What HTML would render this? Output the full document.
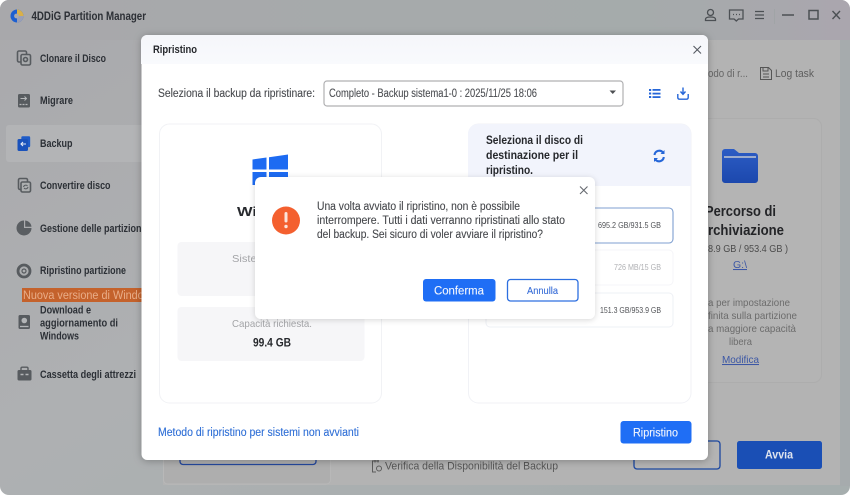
<!DOCTYPE html>
<html lang="it">
<head>
<meta charset="utf-8">
<title>4DDiG Partition Manager</title>
<style>
html,body{margin:0;padding:0;width:850px;height:496px;overflow:hidden;background:#fff}
svg{display:block;filter:blur(.3px)}
text{font-family:"Liberation Sans",sans-serif}
.s{font-size:11px;font-weight:bold;fill:#2c3036}
</style>
</head>
<body>
<svg width="850" height="496" viewBox="0 0 850 496" xmlns="http://www.w3.org/2000/svg">
<defs>
<linearGradient id="bg" x1="0" y1="0" x2="1" y2="1">
<stop offset="0" stop-color="#a9a9ac"/><stop offset=".45" stop-color="#aeb0b2"/><stop offset="1" stop-color="#a6aeae"/>
</linearGradient>
<linearGradient id="top" x1="0" y1="0" x2="1" y2="0">
<stop offset="0" stop-color="#a8a8ab"/><stop offset=".75" stop-color="#a5abab"/><stop offset="1" stop-color="#aaa6ae"/>
</linearGradient>
<linearGradient id="hd" x1="0" y1="0" x2="0" y2="1">
<stop offset="0" stop-color="#f5f6fa"/><stop offset="1" stop-color="#f9fafd"/>
</linearGradient>
<linearGradient id="fold" x1="0" y1="0" x2="0" y2="1">
<stop offset="0" stop-color="#2c5cc4"/><stop offset="1" stop-color="#1c48ad"/>
</linearGradient>
<filter id="sh" x="-10%" y="-10%" width="120%" height="120%"><feDropShadow dx="0" dy="1" stdDeviation="4" flood-color="#000" flood-opacity=".28"/></filter>
<filter id="sh2" x="-10%" y="-15%" width="120%" height="130%"><feDropShadow dx="0" dy="1" stdDeviation="3" flood-color="#000" flood-opacity=".16"/></filter>
<clipPath id="sideclip"><rect x="0" y="0" width="142" height="496"/></clipPath>
<clipPath id="modalclip"><rect x="141" y="35" width="567" height="425" rx="6"/></clipPath>
</defs>

<!-- window -->
<rect width="850" height="496" fill="#fff"/>
<rect x="0" y="0" width="850" height="495" rx="9" fill="url(#bg)"/>
<path d="M0 9a9 9 0 0 1 9-9H841a9 9 0 0 1 9 9V40H0z" fill="url(#top)"/>
<rect x="163" y="40" width="677" height="445" fill="#b3b3b3"/>
<rect x="840" y="40" width="10" height="446" fill="#a6abad"/>

<!-- title bar -->
<circle cx="17" cy="16" r="6.5" fill="#1c5fd0"/>
<path d="M17 9.5a6.5 6.5 0 0 1 6.5 6.5H17z" fill="#d9b04a"/>
<path d="M17 16h6.5a6.5 6.5 0 0 1-6.5 6.5z" fill="#9a9fb6"/>
<circle cx="16.5" cy="16" r="2.4" fill="#a9a9ac"/>
<text x="31.5" y="20" font-size="11.5" font-weight="bold" fill="#2c2f35" textLength="114.5" lengthAdjust="spacingAndGlyphs">4DDiG Partition Manager</text>

<g fill="none" stroke="#4c5054" stroke-width="1.3">
<circle cx="710.5" cy="12.5" r="3"/>
<path d="M705.5 20.5v-1.2c0-1.5 1.5-2.3 5-2.3s5 .8 5 2.3v1.2z"/>
<path d="M729.5 10h13.5v9h-4.5l-2.2 2-2.2-2h-4.600z"/>
<path d="M755 11.5h9M755 15h9M755 18.500h9"/>
<path d="M782 15h12" stroke-width="1.500"/>
<rect x="809" y="10.500" width="9" height="8.500" stroke-width="1.500"/>
<path d="M832.500 11l7.500 8M840 11l-7.500 8" stroke-width="1.400"/>
</g>
<path d="M733 14.500h1M736 14.500h1M739 14.500h1" stroke="#4c5054" stroke-width="1.200"/>
<path d="M774.500 9v15" stroke="#a0a4a6"/>

<!-- sidebar -->
<rect x="6" y="125" width="140" height="37" rx="3" fill="#b3b4b6"/>
<g fill="none" stroke="#575b5f" stroke-width="1.600">
<rect x="17.500" y="51" width="9" height="11" rx="1.500"/>
<rect x="21" y="54.500" width="9.500" height="10.500" rx="1.500" fill="#a9abad"/>
<circle cx="25.500" cy="59.500" r="2"/>
<rect x="18.500" y="178.500" width="9" height="11" rx="1.500"/>
<rect x="21" y="182" width="9.500" height="10" rx="1.500" fill="#acaeaf"/>
<path d="M23.500 187a2.300 2.300 0 0 1 4-1M28 187a2.300 2.300 0 0 1-4 1" stroke-width="1"/>
<circle cx="24" cy="271" r="6" stroke-width="2.800"/>
<circle cx="24" cy="271" r="2" stroke-width="1.200"/>
</g>
<rect x="18" y="94" width="12" height="13.500" rx="1.500" fill="#575b5f"/>
<path d="M20.500 98.500h6m-2-2l2 2-2 2" fill="none" stroke="#b6b8ba" stroke-width="1"/>
<path d="M19.500 104.500h9" stroke="#b6b8ba" stroke-width="1.200" stroke-dasharray="2 1"/>
<rect x="21" y="136" width="9.500" height="11.500" rx="1.500" fill="#1f5cc8" stroke="#b5b6b8" stroke-width=".6"/>
<rect x="17.500" y="139" width="10.500" height="12" rx="1.500" fill="#1a52bb"/>
<path d="M26 144h-5m2-2l-2 2 2 2" fill="none" stroke="#e4e9f4" stroke-width="1.100"/>
<path d="M31.500 228a7.500 7.500 0 1 1-7.500-7.500V228z" fill="#5a5e62"/>
<path d="M25.200 220.500a7 7 0 0 1 6.300 6.300h-6.300z" fill="#5a5e62"/>
<rect x="18.500" y="315" width="11.500" height="14" rx="1.500" fill="#575b5f"/>
<circle cx="24.300" cy="320.500" r="2.800" fill="#b3b5b7"/>
<path d="M20 326.500h8.500" stroke="#b3b5b7" stroke-width="1.300"/>
<rect x="17.500" y="370" width="14" height="10.500" rx="1.500" fill="#575b5f"/>
<path d="M21 370v-1.500c0-.8.500-1.300 1.300-1.300h4.400c.8 0 1.300.5 1.300 1.300v1.500" fill="none" stroke="#575b5f" stroke-width="1.400"/>
<path d="M20.500 374.500h3M25.500 374.500h3" stroke="#b3b5b7" stroke-width="1.500"/>

<g clip-path="url(#sideclip)">
<text class="s" x="40" y="62" textLength="66" lengthAdjust="spacingAndGlyphs">Clonare il Disco</text>
<text class="s" x="40" y="104" textLength="33" lengthAdjust="spacingAndGlyphs">Migrare</text>
<text class="s" x="40" y="147" textLength="32.500" lengthAdjust="spacingAndGlyphs">Backup</text>
<text class="s" x="40" y="189" textLength="70.500" lengthAdjust="spacingAndGlyphs">Convertire disco</text>
<text class="s" x="40" y="232" textLength="104" lengthAdjust="spacingAndGlyphs">Gestione delle partizioni</text>
<text class="s" x="40" y="274" textLength="86" lengthAdjust="spacingAndGlyphs">Ripristino partizione</text>
<rect x="22" y="288" width="125" height="14" fill="#c4622c"/>
<text x="23" y="299" font-size="11.500" fill="#e9ad88" textLength="134" lengthAdjust="spacingAndGlyphs">Nuova versione di Windows</text>
<text class="s" x="40" y="313.500" textLength="51" lengthAdjust="spacingAndGlyphs">Download e</text>
<text class="s" x="40" y="326.500" textLength="78" lengthAdjust="spacingAndGlyphs">aggiornamento di</text>
<text class="s" x="40" y="339.500" textLength="39" lengthAdjust="spacingAndGlyphs">Windows</text>
<text class="s" x="40" y="378" textLength="96" lengthAdjust="spacingAndGlyphs">Cassetta degli attrezzi</text>
</g>

<!-- right panel behind -->
<text x="708" y="77" font-size="11" fill="#666" textLength="40" lengthAdjust="spacingAndGlyphs">odo di r...</text>
<path d="M760.500 67.500h8l3 3v9h-11zM763 67.500v3.500h5v-3.500M763 74h6M763 77h6" fill="none" stroke="#555" stroke-width="1"/>
<text x="775" y="77" font-size="11" fill="#5e5e5e" textLength="39" lengthAdjust="spacingAndGlyphs">Log task</text>
<rect x="680" y="118.500" width="141.500" height="264" rx="8" fill="#b4b4b4" stroke="#adadad"/>
<path d="M722 152a3 3 0 0 1 3-3h9l5 4h16a3 3 0 0 1 3 3v24a3 3 0 0 1-3 3H725a3 3 0 0 1-3-3z" fill="url(#fold)"/>
<path d="M724 157h32" stroke="#c3c8d2" stroke-width="1.500"/>
<text x="705" y="216" font-size="14.500" font-weight="bold" fill="#232427" textLength="71" lengthAdjust="spacingAndGlyphs">Percorso di</text>
<text x="708" y="235" font-size="14.500" font-weight="bold" fill="#232427" textLength="76" lengthAdjust="spacingAndGlyphs">rchiviazione</text>
<text x="708" y="252" font-size="10.500" fill="#4c4c4c" textLength="80" lengthAdjust="spacingAndGlyphs">8.9 GB / 953.4 GB )</text>
<text x="733" y="268" font-size="10.500" fill="#3c57a5" textLength="14" lengthAdjust="spacingAndGlyphs" text-decoration="underline">G:\</text>
<g font-size="10.500" fill="#6c6c6c">
<text x="708" y="306" textLength="82" lengthAdjust="spacingAndGlyphs">a per impostazione</text>
<text x="708" y="319" textLength="89" lengthAdjust="spacingAndGlyphs">finita sulla partizione</text>
<text x="708" y="332" textLength="88" lengthAdjust="spacingAndGlyphs">a maggiore capacità</text>
<text x="729" y="345" textLength="23" lengthAdjust="spacingAndGlyphs">libera</text>
</g>
<text x="722" y="363" font-size="10.500" fill="#3c57a5" textLength="37" lengthAdjust="spacingAndGlyphs" text-decoration="underline">Modifica</text>

<!-- bottom area behind -->
<rect x="163.500" y="430" width="167" height="54" rx="4" fill="#aeaeae" stroke="#b8b8b8"/>
<rect x="180" y="430" width="136" height="34.500" rx="3" fill="#b0b0b0" stroke="#24479c" stroke-width="1.300"/>
<rect x="634" y="441" width="86" height="28" rx="3" fill="#b4b4b4" stroke="#1b47a0" stroke-width="1.300"/>
<rect x="737" y="441" width="85" height="28" rx="2.500" fill="#1a4fb5"/>
<text x="765" y="458.500" font-size="12" font-weight="bold" fill="#dfe4ee" textLength="28" lengthAdjust="spacingAndGlyphs">Avvia</text>
<path d="M379 461h-6.500v11h3.500M375 460v2.500M378 460v2.500" fill="none" stroke="#5c5c5c" stroke-width="1"/>
<circle cx="379" cy="468.500" r="2.500" fill="none" stroke="#5c5c5c"/>
<text x="385" y="469.500" font-size="11" fill="#555" textLength="173" lengthAdjust="spacingAndGlyphs">Verifica della Disponibilità del Backup</text>

<!-- restore dialog -->
<rect x="141.500" y="35" width="566.500" height="425" rx="6" fill="#fff" filter="url(#sh)"/>
<g clip-path="url(#modalclip)"><rect x="141" y="35" width="567" height="29" fill="url(#hd)"/></g>
<text x="153" y="53" font-size="11" fill="#26282c" font-weight="bold" textLength="44" lengthAdjust="spacingAndGlyphs">Ripristino</text>
<path d="M693.500 46l7.500 7.500M701 46l-7.500 7.500" stroke="#555a62" stroke-width="1.100" fill="none"/>

<text x="158" y="97" font-size="11.500" fill="#4a4c50" stroke="#4a4c50" stroke-width=".12" textLength="157" lengthAdjust="spacingAndGlyphs">Seleziona il backup da ripristinare:</text>
<rect x="324" y="81" width="299" height="25" rx="3" fill="#fff" stroke="#b0b0b2" stroke-width="1.200"/>
<text x="329" y="97" font-size="11.500" fill="#4e5054" stroke="#4e5054" stroke-width=".12" textLength="208" lengthAdjust="spacingAndGlyphs">Completo - Backup sistema1-0 :  2025/11/25 18:06</text>
<path d="M609.500 90.500h6.500l-3.250 3.500z" fill="#4d4f52"/>
<g fill="#2566d8">
<rect x="649" y="89" width="2.200" height="2"/><rect x="649" y="92.500" width="2.200" height="2"/><rect x="649" y="96" width="2.200" height="2"/>
<rect x="652.500" y="89" width="8" height="1.800"/><rect x="652.500" y="92.700" width="8" height="1.800"/><rect x="652.500" y="96.200" width="8" height="1.800"/>
</g>
<path d="M683 87.500v6.500m-2.500-2.500l2.500 2.800 2.500-2.800M677.800 94v3.500c0 1 .7 1.700 1.700 1.700h7c1 0 1.700-.7 1.700-1.700V94" fill="none" stroke="#2566d8" stroke-width="1.400"/>

<!-- left card -->
<rect x="159.500" y="124" width="222" height="279" rx="10" fill="#fff" stroke="#f1f2f5"/>
<path d="M252.500 159.500l14-2v12h-14zM269 157.200l19-2.700v15h-19zM252.500 172h14v13h-14zM269 172h19v15h-19z" fill="#1d6bf2"/>
<text x="237" y="216" font-size="12.500" font-weight="bold" fill="#27292d" textLength="30" lengthAdjust="spacingAndGlyphs">Win</text>
<rect x="177.500" y="242" width="187" height="54" rx="4" fill="#f6f6f8"/>
<rect x="177.500" y="307" width="187" height="54" rx="4" fill="#f6f6f8"/>
<text x="232" y="262" font-size="10.500" fill="#a3a4a7" textLength="40" lengthAdjust="spacingAndGlyphs">Sistema</text>
<text x="232" y="327" font-size="10.500" fill="#a3a4a7" textLength="80" lengthAdjust="spacingAndGlyphs">Capacità richiesta.</text>
<text x="253" y="346.500" font-size="11.500" font-weight="bold" fill="#26282c" textLength="38" lengthAdjust="spacingAndGlyphs">99.4 GB</text>

<!-- right card -->
<rect x="468.500" y="124" width="222.500" height="279" rx="10" fill="#fff" stroke="#f1f2f6"/>
<path d="M468 186V134a10 10 0 0 1 10-10h203a10 10 0 0 1 10 10v52z" fill="#f2f4fc"/>
<g font-size="11.500" font-weight="bold" fill="#26282c">
<text x="486" y="144" textLength="97" lengthAdjust="spacingAndGlyphs">Seleziona il disco di</text>
<text x="486" y="159" textLength="92" lengthAdjust="spacingAndGlyphs">destinazione per il</text>
<text x="486" y="174" textLength="47" lengthAdjust="spacingAndGlyphs">ripristino.</text>
</g>
<path d="M654.500 155a4.800 4.800 0 0 1 8.500-2.500M663.800 157a4.800 4.800 0 0 1-8.500 2.500" fill="none" stroke="#2566d8" stroke-width="2.100"/>
<path d="M664.500 150v4h-4zM654 162v-4h4z" fill="#2566d8"/>

<rect x="486" y="208" width="187" height="35" rx="4" fill="#fff" stroke="#7f9fd0" stroke-width="1.100"/>
<text x="598" y="228" font-size="8.500" fill="#505256" textLength="63" lengthAdjust="spacingAndGlyphs">695.2 GB/931.5 GB</text>
<rect x="486" y="250" width="187" height="35" rx="4" fill="#fff" stroke="#f5f5f8"/>
<text x="614" y="270" font-size="8.500" fill="#b0b1b4" textLength="47" lengthAdjust="spacingAndGlyphs">726 MB/15 GB</text>
<rect x="486" y="293" width="187" height="34" rx="4" fill="#fff" stroke="#eef0f5"/>
<text x="600" y="313" font-size="8.500" fill="#505256" textLength="61" lengthAdjust="spacingAndGlyphs">151.3 GB/953.9 GB</text>

<text x="158" y="436" font-size="11.500" fill="#2f6fd6" stroke="#2f6fd6" stroke-width=".12" textLength="201" lengthAdjust="spacingAndGlyphs">Metodo di ripristino per sistemi non avvianti</text>
<rect x="620.500" y="421" width="71" height="22.500" rx="3" fill="#1f6ef5"/>
<text x="633" y="436.500" font-size="11.500" fill="#f1f5fd" stroke="#f1f5fd" stroke-width=".12" textLength="45" lengthAdjust="spacingAndGlyphs">Ripristino</text>

<!-- confirm modal -->
<rect x="255" y="177" width="340" height="142" rx="6" fill="#fff" filter="url(#sh2)"/>
<path d="M580 186.500l7.500 7.500M587.500 186.500l-7.500 7.500" stroke="#666a70" stroke-width="1.100" fill="none"/>
<circle cx="286" cy="220.500" r="14" fill="#f4602f"/>
<rect x="284.500" y="212" width="3" height="10.500" rx="1.500" fill="#fbe3da"/>
<circle cx="286" cy="226.500" r="1.700" fill="#fbe3da"/>
<g font-size="11.500" fill="#47494d" stroke="#47494d" stroke-width=".12">
<text x="317" y="210" textLength="203" lengthAdjust="spacingAndGlyphs">Una volta avviato il ripristino, non è possibile</text>
<text x="317" y="224" textLength="248" lengthAdjust="spacingAndGlyphs">interrompere. Tutti i dati verranno ripristinati allo stato</text>
<text x="317" y="238" textLength="226" lengthAdjust="spacingAndGlyphs">del backup. Sei sicuro di voler avviare il ripristino?</text>
</g>
<rect x="423" y="279" width="72.500" height="22.500" rx="3" fill="#1f6ef5"/>
<text x="434" y="294.500" font-size="11.500" fill="#f1f5fd" stroke="#f1f5fd" stroke-width=".12" textLength="50" lengthAdjust="spacingAndGlyphs">Conferma</text>
<rect x="507.500" y="279.500" width="70.500" height="21.500" rx="3" fill="#fff" stroke="#2d6fe0" stroke-width="1.300"/>
<text x="527" y="293.800" font-size="10.500" fill="#3a6fd8" stroke="#3a6fd8" stroke-width=".12" textLength="31" lengthAdjust="spacingAndGlyphs">Annulla</text>
</svg>
</body>
</html>
